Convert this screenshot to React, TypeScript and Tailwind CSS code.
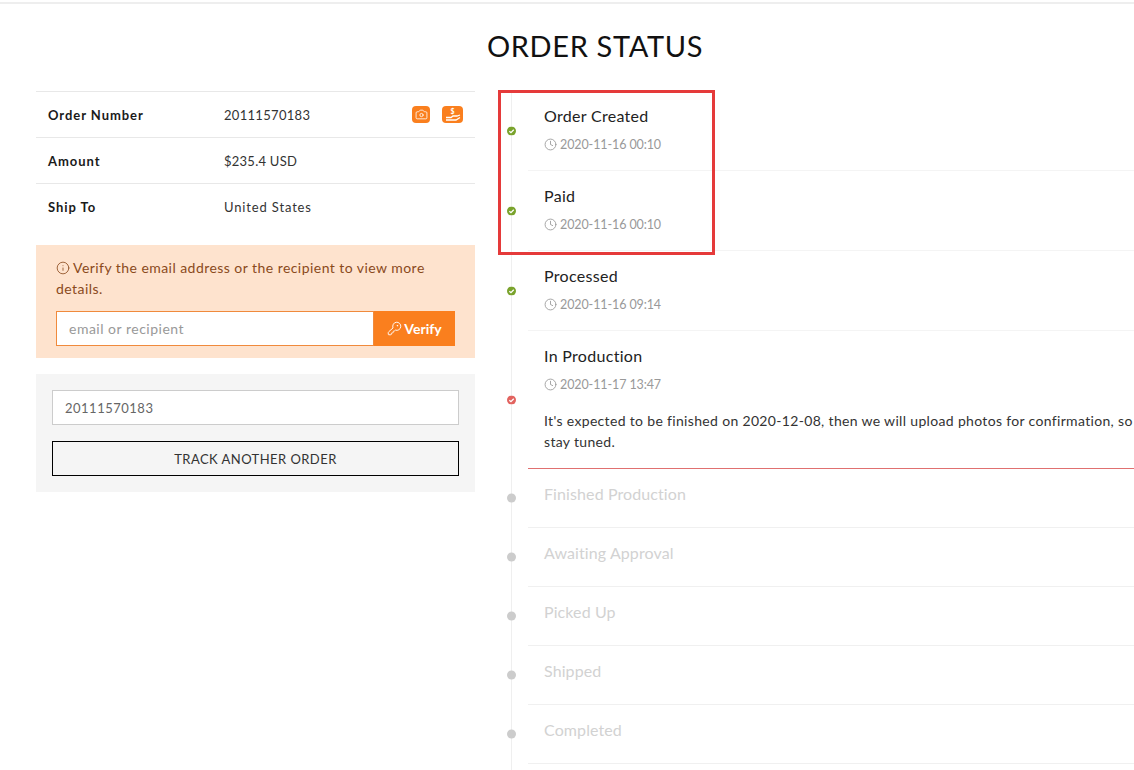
import { Clock, Info, KeyRound, Camera } from "lucide-react";

const font = { fontFamily: "Lato, 'Noto Sans', sans-serif" };

const done = [
  { title: "Order Created", time: "2020-11-16 00:10" },
  { title: "Paid", time: "2020-11-16 00:10" },
  { title: "Processed", time: "2020-11-16 09:14" },
];
const pending = ["Finished Production", "Awaiting Approval", "Picked Up", "Shipped", "Completed"];

function CheckDot({ color }: { color: string }) {
  return (
    <svg viewBox="0 0 10 10" className="absolute left-[-21px] top-1/2 w-[9px] h-[9px] -translate-y-1/2">
      <circle cx="5" cy="5" r="5" fill={color} />
      <path d="M2.6 5.2 L4.4 6.9 L7.5 3.6" stroke="#fff" strokeWidth="1.4" fill="none" />
    </svg>
  );
}

function HandIcon() {
  return (
    <span className="flex h-[17px] w-[21px] items-center justify-center rounded-[4px] bg-[#fa7f1e]">
      <svg viewBox="0 0 21 17" className="h-[17px] w-[21px]" fill="none">
        <text x="10.5" y="8" textAnchor="middle" fontSize="7" fontWeight="700" fill="#fff">$</text>
        <path d="M4 11.5 H9 L11 10 H15 L18 9 M4 14 H14 L18 11.5" stroke="#fff" strokeWidth="1.3" />
      </svg>
    </span>
  );
}

function TimeRow({ time }: { time: string }) {
  return (
    <div className="mt-[10px] flex h-[18px] items-center gap-[3px] text-[12.5px] tracking-[-0.1px] text-[#999]">
      <Clock className="mb-[2px] h-[13px] w-[13px]" strokeWidth={1.6} />
      <span>{time}</span>
    </div>
  );
}

export default function App() {
  return (
    <div className="h-[770px] w-[1134px] overflow-hidden bg-white text-[#222]" style={font}>
      <div className="h-[4px] border-b-2 border-[#eeeeee]" />
      <div className="relative ml-[36px] w-[1118px]">
        <h1 className="pt-[24px] pb-[1px] text-center text-[29px] leading-[36px] tracking-[0.65px] text-[#111]">ORDER STATUS</h1>

        <div className="mt-[26px] flex items-start">
          {/* left column */}
          <div className="w-[439px] shrink-0">
            <div className="text-[13px]">
              <div className="flex h-[46px] items-center border-t border-[#e8e8e8] pl-[12px] pr-[12px] pt-[2px]">
                <span className="w-[176px] font-bold tracking-[0.95px] text-[#1a1a1a]">Order Number</span>
                <span className="tracking-[0.3px] text-[#333]">20111570183</span>
                <span className="ml-auto mb-[2px] flex items-center gap-[12px]">
                  <span className="flex h-[17px] w-[18px] items-center justify-center rounded-[4px] bg-[#fa7f1e]">
                    <Camera className="h-[13px] w-[13px] text-white" strokeWidth={1.5} />
                  </span>
                  <HandIcon />
                </span>
              </div>
              <div className="flex h-[46px] items-center border-t border-[#e8e8e8] pl-[12px] pt-[2px]">
                <span className="w-[176px] font-bold tracking-[0.95px] text-[#1a1a1a]">Amount</span>
                <span className="tracking-[0.25px] text-[#333]">$235.4 USD</span>
              </div>
              <div className="flex h-[46px] items-center border-t border-[#e8e8e8] pl-[12px] pt-[2px]">
                <span className="w-[176px] font-bold tracking-[0.95px] text-[#1a1a1a]">Ship To</span>
                <span className="tracking-[0.85px] text-[#333]">United States</span>
              </div>
            </div>

            <div className="mt-[16px] h-[113px] bg-[#fee3ce] px-[20px] pt-[12px]">
              <p className="text-[14px] leading-[21px] tracking-[0.45px] text-[#8a4a1c]">
                <Info className="mb-[2px] mr-[3px] inline h-[14px] w-[14px]" strokeWidth={1.4} />
                Verify the email address or the recipient to view more details.
              </p>
              <div className="mt-[12px] flex h-[35px]">
                <input
                  readOnly
                  placeholder="email or recipient"
                  className="w-[318px] border border-[#f08a3c] bg-white px-3 text-[14px] tracking-[0.5px] outline-none placeholder:text-[#999]"
                />
                <button className="flex w-[81px] items-center justify-center gap-[2px] bg-[#fa7f1e] text-[14px] font-bold text-white">
                  <KeyRound className="h-[15px] w-[15px]" strokeWidth={1.5} />
                  Verify
                </button>
              </div>
            </div>

            <div className="mt-[16px] h-[118px] bg-[#f5f5f5] px-[16px] pt-[16px]">
              <input
                readOnly
                value="20111570183"
                className="h-[35px] w-full border border-[#cccccc] bg-white px-3 text-[13px] tracking-[0.5px] text-[#666] outline-none"
              />
              <button className="mt-[16px] h-[35px] w-full border border-black bg-transparent pt-[2px] text-[13px] tracking-[0.45px] text-[#333]">
                TRACK ANOTHER ORDER
              </button>
            </div>
          </div>

          {/* timeline */}
          <div className="relative ml-[23px] flex-1 pb-[10px] pl-[30px]">
            <div className="absolute bottom-0 left-[13px] top-0 w-px bg-[#efefef]" />
            {done.map((s) => (
              <div key={s.title} className="relative h-[80px] border-b border-[#f4f4f4] pl-[16px] pt-[15px]">
                <CheckDot color="#7aa32c" />
                <div className="text-[16px] leading-[20px] tracking-[0.3px] text-[#222]">{s.title}</div>
                <TimeRow time={s.time} />
              </div>
            ))}
            <div className="relative h-[138px] border-b border-[#e07070] pl-[16px] pt-[15px]">
              <CheckDot color="#e2635f" />
              <div className="text-[16px] leading-[20px] tracking-[0.3px] text-[#222]">In Production</div>
              <TimeRow time="2020-11-17 13:47" />
              <p className="mt-[16px] text-[14px] leading-[21px] tracking-[0.33px] text-[#333]">
                It's expected to be finished on 2020-12-08, then we will upload photos for confirmation, so
                <br />
                stay tuned.
              </p>
            </div>
            {pending.map((s) => (
              <div key={s} className="relative flex h-[59px] items-center border-b border-[#f0f0f0] pb-[8px] pl-[16px]">
                <span className="absolute left-[-21px] top-1/2 h-[9px] w-[9px] -translate-y-1/2 rounded-full bg-[#cccccc]" />
                <span className="text-[16px] tracking-[0.1px] text-[#d2d2d2]">{s}</span>
              </div>
            ))}
          </div>
        </div>

        {/* annotation box drawn over the timeline */}
        <div className="pointer-events-none absolute left-[462px] top-[86px] h-[165px] w-[217px] border-[3px] border-[#e53a3a]" />
      </div>
    </div>
  );
}
